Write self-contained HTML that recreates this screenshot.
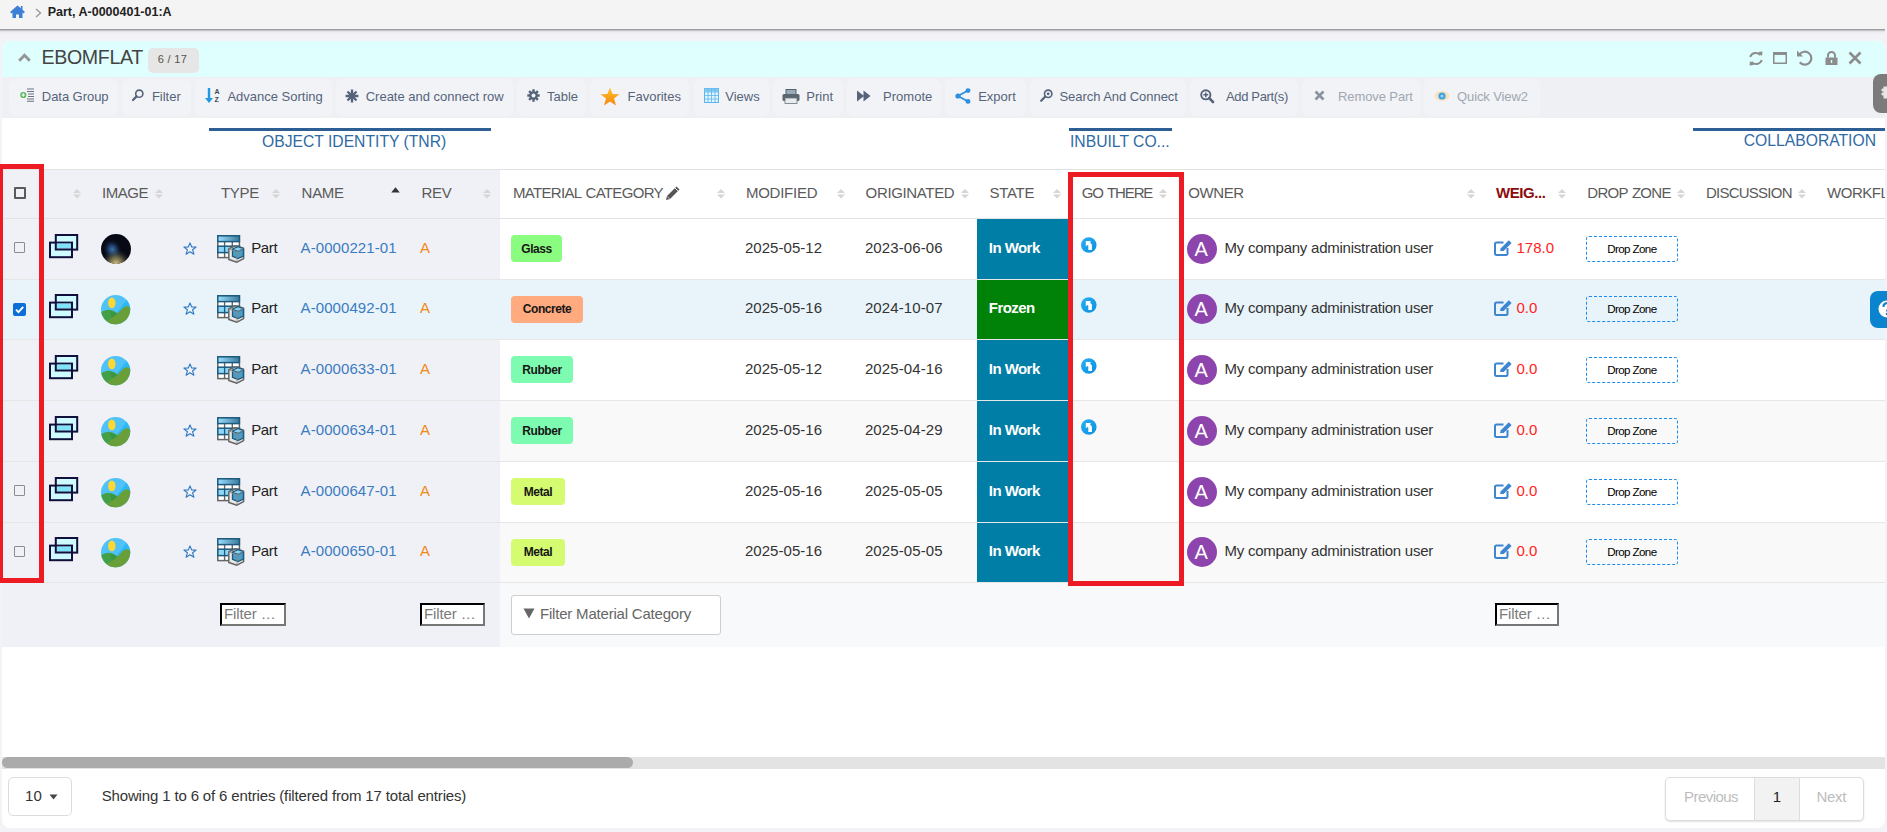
<!DOCTYPE html>
<html><head><meta charset="utf-8"><title>EBOMFLAT</title>
<style>
html,body{margin:0;padding:0}
body{width:1887px;height:832px;overflow:hidden;background:#f2f2f7;font-family:"Liberation Sans", sans-serif;position:relative}
.a{position:absolute}
.t{position:absolute;white-space:nowrap;line-height:1}
svg{overflow:visible}
</style></head><body>
<div class="a" style="left:-6px;top:0px;width:1899px;height:29px;background:#f4f4f4;box-shadow:0 1px 2px rgba(0,0,0,.45),0 2px 5px rgba(0,0,0,.08);"></div>
<svg class="a" style="left:10px;top:5px;" width="15" height="13" viewBox="0 0 15 13"><path d="M7.5 0.5 L0 7 L1.6 8.4 L2.5 7.6 V13 H6 V9.5 H9 V13 H12.5 V7.6 L13.4 8.4 L15 7 L12.5 4.8 V1 H10.8 V3.3 Z" fill="#3c7fd4"/></svg>
<svg class="a" style="left:35px;top:8px;" width="7" height="10" viewBox="0 0 7 10"><path d="M1 1 L5.5 5 L1 9" fill="none" stroke="#9a9a9a" stroke-width="1.4"/></svg>
<div class="t" style="top:6.42px;font-size:12.5px;color:#222;left:47.70px;font-weight:700;">Part, A-0000401-01:A</div>
<div class="a" style="left:2px;top:41px;width:1883px;height:787px;background:#fff;border-radius:8px;"></div>
<div class="a" style="left:2px;top:41px;width:1883px;height:36px;background:#dfffff;border-radius:8px 8px 0 0;"></div>
<svg class="a" style="left:18px;top:53px;" width="14" height="9" viewBox="0 0 14 9"><path d="M1.2 7.8 L6.5 2.3 L11.8 7.8" fill="none" stroke="#949494" stroke-width="2.8"/></svg>
<div class="t" style="top:48.41px;font-size:19.6px;color:#444;left:41.50px;letter-spacing:-0.35px;">EBOMFLAT</div>
<div class="a" style="left:148px;top:48px;width:51px;height:25px;background:#e6e6e6;border-radius:5px;"></div>
<div class="t" style="top:54.49px;font-size:11px;color:#5a5048;left:157.80px;letter-spacing:0.3px;">6 / 17</div>
<svg class="a" style="left:1748px;top:51px;" width="16" height="15" viewBox="0 0 16 15"><path d="M12.5 4.2 A6 6 0 0 0 2.2 6" fill="none" stroke="#8c8c8c" stroke-width="2"/><path d="M10 1 L14.5 0.5 L14 5 Z" fill="#8c8c8c"/><path d="M3.5 10.8 A6 6 0 0 0 13.8 9" fill="none" stroke="#8c8c8c" stroke-width="2"/><path d="M6 14 L1.5 14.5 L2 10 Z" fill="#8c8c8c"/></svg>
<svg class="a" style="left:1773px;top:52px;" width="14" height="12" viewBox="0 0 14 12"><rect x="0.75" y="0.75" width="12.5" height="10.5" fill="none" stroke="#8c8c8c" stroke-width="1.5"/><rect x="0" y="0" width="14" height="3" fill="#8c8c8c"/></svg>
<svg class="a" style="left:1796px;top:50px;" width="17" height="16" viewBox="0 0 17 16"><path d="M3.5 4.5 A6.5 6.5 0 1 1 3.8 12.3" fill="none" stroke="#8c8c8c" stroke-width="2.2"/><path d="M1 0.5 V6.5 H7 Z" fill="#8c8c8c"/></svg>
<svg class="a" style="left:1825px;top:51px;" width="13" height="14" viewBox="0 0 13 14"><path d="M3 6.5 V4.5 A3.5 3.5 0 0 1 10 4.5 V6.5" fill="none" stroke="#8c8c8c" stroke-width="2"/><rect x="0.5" y="6.5" width="12" height="7.5" fill="#8c8c8c"/><rect x="5.8" y="9" width="1.4" height="3" fill="#dcfefe"/></svg>
<svg class="a" style="left:1848px;top:51px;" width="14" height="14" viewBox="0 0 14 14"><path d="M1.5 1.5 L12.5 12.5 M12.5 1.5 L1.5 12.5" stroke="#8c8c8c" stroke-width="2.6"/></svg>
<div class="a" style="left:2px;top:77px;width:1883px;height:41px;background:#eff0f4;"></div>
<div class="a" style="left:9px;top:79px;width:109px;height:37px;background:#f2f3f6;border-radius:7px;"></div>
<div class="a" style="left:122px;top:79px;width:69px;height:37px;background:#f2f3f6;border-radius:7px;"></div>
<div class="a" style="left:195px;top:79px;width:137px;height:37px;background:#f2f3f6;border-radius:7px;"></div>
<div class="a" style="left:336px;top:79px;width:177px;height:37px;background:#f2f3f6;border-radius:7px;"></div>
<div class="a" style="left:517px;top:79px;width:69px;height:37px;background:#f2f3f6;border-radius:7px;"></div>
<div class="a" style="left:590px;top:79px;width:99px;height:37px;background:#f2f3f6;border-radius:7px;"></div>
<div class="a" style="left:694px;top:79px;width:75px;height:37px;background:#f2f3f6;border-radius:7px;"></div>
<div class="a" style="left:773px;top:79px;width:70px;height:37px;background:#f2f3f6;border-radius:7px;"></div>
<div class="a" style="left:847px;top:79px;width:94px;height:37px;background:#f2f3f6;border-radius:7px;"></div>
<div class="a" style="left:945px;top:79px;width:81px;height:37px;background:#f2f3f6;border-radius:7px;"></div>
<div class="a" style="left:1030px;top:79px;width:156px;height:37px;background:#f2f3f6;border-radius:7px;"></div>
<div class="a" style="left:1190px;top:79px;width:108px;height:37px;background:#f2f3f6;border-radius:7px;"></div>
<div class="a" style="left:1302px;top:79px;width:118px;height:37px;background:#f2f3f6;border-radius:7px;"></div>
<div class="a" style="left:1424px;top:79px;width:116px;height:37px;background:#f2f3f6;border-radius:7px;"></div>
<svg class="a" style="left:20px;top:88px;" width="15" height="14" viewBox="0 0 15 14"><circle cx="3.3" cy="7" r="3.1" fill="#5cb85c"/><path d="M1.6 7 H5 M3.3 5.3 V8.7" stroke="#fff" stroke-width="1.1"/><path d="M7 1 H14 M7 3.5 H14 M8 6 H14 M8 8.5 H14 M7 11 H14 M7 13.3 H14" stroke="#6c7280" stroke-width="1.1"/></svg>
<div class="t" style="top:90.20px;font-size:13px;color:#55647a;left:41.80px;letter-spacing:-0.05px;">Data Group</div>
<svg class="a" style="left:132px;top:89px;" width="12" height="12" viewBox="0 0 12 12"><circle cx="7.3" cy="4.7" r="3.6" fill="none" stroke="#55647a" stroke-width="1.6"/><path d="M4.6 7.4 L1 11" stroke="#55647a" stroke-width="2.2" stroke-linecap="round"/></svg>
<div class="t" style="top:90.20px;font-size:13px;color:#55647a;left:151.90px;">Filter</div>
<svg class="a" style="left:205px;top:87px;" width="16" height="17" viewBox="0 0 16 17"><path d="M4 1 V13" stroke="#1e9be0" stroke-width="2.4"/><path d="M0 11 L4 16 L8 11 Z" fill="#1e9be0"/><text x="9.5" y="7" font-size="7" font-weight="700" fill="#3a4a58" font-family="Liberation Sans">A</text><text x="9.5" y="15" font-size="7" font-weight="700" fill="#3a4a58" font-family="Liberation Sans">Z</text></svg>
<div class="t" style="top:90.20px;font-size:13px;color:#55647a;left:227.40px;">Advance Sorting</div>
<svg class="a" style="left:345px;top:89px;" width="14" height="14" viewBox="0 0 14 14"><path d="M7 0.6 V13.4 M0.6 7 H13.4 M2.5 2.5 L11.5 11.5 M11.5 2.5 L2.5 11.5" stroke="#55647a" stroke-width="2.3"/><circle cx="7" cy="7" r="3.2" fill="#55647a"/></svg>
<div class="t" style="top:90.20px;font-size:13px;color:#55647a;left:365.70px;">Create and connect row</div>
<svg class="a" style="left:527px;top:89px;" width="13" height="13" viewBox="0 0 13 13"><path d="M6.5 0.3 V12.7 M0.3 6.5 H12.7 M2.1 2.1 L10.9 10.9 M10.9 2.1 L2.1 10.9" stroke="#55647a" stroke-width="2.4"/><circle cx="6.5" cy="6.5" r="4.3" fill="#55647a"/><circle cx="6.5" cy="6.5" r="2" fill="#f2f3f6"/></svg>
<div class="t" style="top:90.20px;font-size:13px;color:#55647a;left:547.00px;">Table</div>
<svg class="a" style="left:600px;top:87px;" width="20" height="19" viewBox="0 0 20 19"><defs><linearGradient id="sg" x1="0" y1="0" x2="0" y2="1"><stop offset="0" stop-color="#ffc42e"/><stop offset="1" stop-color="#f5850c"/></linearGradient></defs><path d="M10 0.5 L12.6 7 L19.5 7.2 L14 11.5 L16 18.5 L10 14.5 L4 18.5 L6 11.5 L0.5 7.2 L7.4 7 Z" fill="url(#sg)"/></svg>
<div class="t" style="top:90.20px;font-size:13px;color:#55647a;left:627.50px;">Favorites</div>
<svg class="a" style="left:704px;top:88px;" width="15" height="15" viewBox="0 0 15 15"><rect x="0.5" y="0.5" width="14" height="14" fill="#e2f4fd" stroke="#5ab6ec"/><rect x="0.5" y="0.5" width="14" height="3" fill="#7fc8f2"/><path d="M0.5 4 H14.5 M0.5 7.5 H14.5 M0.5 11 H14.5 M4 0.5 V14.5 M7.5 0.5 V14.5 M11 0.5 V14.5" stroke="#5ab6ec" stroke-width="0.8"/></svg>
<div class="t" style="top:90.20px;font-size:13px;color:#55647a;left:725.30px;">Views</div>
<svg class="a" style="left:782px;top:89px;" width="18" height="15" viewBox="0 0 18 15"><rect x="4" y="0.5" width="10" height="5" fill="#9ab" stroke="#566"/><rect x="0.5" y="5" width="17" height="7" rx="1.5" fill="#5a6570"/><rect x="3" y="9" width="12" height="5.5" fill="#e8ecef" stroke="#6a757f" stroke-width="0.8"/></svg>
<div class="t" style="top:90.20px;font-size:13px;color:#55647a;left:806.30px;">Print</div>
<svg class="a" style="left:857px;top:90px;" width="14" height="12" viewBox="0 0 14 12"><path d="M0 0.5 L7 6 L0 11.5 Z M6.5 0.5 L13.5 6 L6.5 11.5 Z" fill="#55647a"/></svg>
<div class="t" style="top:90.20px;font-size:13px;color:#55647a;left:883.10px;">Promote</div>
<svg class="a" style="left:955px;top:88px;" width="16" height="16" viewBox="0 0 16 16"><path d="M3 8 L13 2.5 M3 8 L13 13.5" stroke="#2c8fe0" stroke-width="1.8"/><circle cx="3" cy="8" r="2.6" fill="#2c8fe0"/><circle cx="13" cy="2.6" r="2.4" fill="#2c8fe0"/><circle cx="13" cy="13.4" r="2.4" fill="#2c8fe0"/></svg>
<div class="t" style="top:90.20px;font-size:13px;color:#55647a;left:978.20px;">Export</div>
<svg class="a" style="left:1040px;top:89px;" width="13" height="13" viewBox="0 0 13 13"><circle cx="8.2" cy="4.8" r="3.7" fill="none" stroke="#55647a" stroke-width="1.6"/><circle cx="8.2" cy="4.8" r="1.4" fill="#55647a"/><path d="M5.3 7.6 L1.2 11.8" stroke="#55647a" stroke-width="2.2" stroke-linecap="round"/></svg>
<div class="t" style="top:90.20px;font-size:13px;color:#55647a;left:1059.50px;letter-spacing:-0.05px;">Search And Connect</div>
<svg class="a" style="left:1200px;top:89px;" width="14" height="14" viewBox="0 0 14 14"><circle cx="5.8" cy="5.8" r="4.6" fill="none" stroke="#55647a" stroke-width="1.9"/><path d="M9.2 9.2 L13 13" stroke="#55647a" stroke-width="2.6" stroke-linecap="round"/><path d="M3.4 5.8 H8.2 M5.8 3.4 V8.2" stroke="#55647a" stroke-width="1.5"/></svg>
<div class="t" style="top:90.20px;font-size:13px;color:#55647a;left:1226.00px;letter-spacing:-0.35px;">Add Part(s)</div>
<svg class="a" style="left:1314px;top:90px;" width="11" height="11" viewBox="0 0 11 11"><path d="M1.5 1.5 L9.5 9.5 M9.5 1.5 L1.5 9.5" stroke="#8a929d" stroke-width="2.6"/></svg>
<div class="t" style="top:90.20px;font-size:13px;color:#a0a7b2;left:1338.00px;letter-spacing:-0.1px;">Remove Part</div>
<svg class="a" style="left:1434px;top:90px;" width="16" height="12" viewBox="0 0 16 12"><ellipse cx="8" cy="6" rx="7.5" ry="5" fill="#fbe1c0"/><circle cx="8" cy="6" r="3.6" fill="#3ba3e0"/><circle cx="8" cy="6" r="1.6" fill="#9dd3f5"/></svg>
<div class="t" style="top:90.20px;font-size:13px;color:#a0a7b2;left:1457.00px;letter-spacing:-0.1px;">Quick View2</div>
<div class="a" style="left:209px;top:128px;width:282px;height:3px;background:#2d5f94;"></div>
<div class="t" style="top:133.71px;font-size:15.7px;color:#2f6aa3;left:262.00px;">OBJECT IDENTITY (TNR)</div>
<div class="a" style="left:1069px;top:128px;width:103px;height:3px;background:#2d5f94;"></div>
<div class="t" style="top:133.71px;font-size:15.7px;color:#2f6aa3;left:1070.00px;">INBUILT CO...</div>
<div class="a" style="left:1693px;top:128px;width:192px;height:3px;background:#2d5f94;"></div>
<div class="t" style="top:133.31px;font-size:15.7px;color:#2f6aa3;right:11.00px;">COLLABORATION</div>
<div class="a" style="left:2px;top:169px;width:1883px;height:1px;background:#e3e3e3;"></div>
<div class="a" style="left:2px;top:170px;width:498px;height:48px;background:#f0f1f6;"></div>
<div class="a" style="left:2px;top:218px;width:1883px;height:1px;background:#e3e3e3;"></div>
<div class="a" style="left:14px;top:187px;width:12px;height:12px;box-sizing:border-box;border:2px solid #5a5a5a;border-radius:1px;"></div>
<svg class="a" style="left:73px;top:189px;" width="8" height="10" viewBox="0 0 8 10"><path d="M4 0 L8 4 L0 4 Z" fill="#d6d6d6"/><path d="M0 5.5 L8 5.5 L4 9.5 Z" fill="#d6d6d6"/></svg>
<div class="t" style="top:185.30px;font-size:15px;color:#5a5a5a;left:102.00px;letter-spacing:-0.45px;">IMAGE</div>
<svg class="a" style="left:155px;top:189px;" width="8" height="10" viewBox="0 0 8 10"><path d="M4 0 L8 4 L0 4 Z" fill="#d6d6d6"/><path d="M0 5.5 L8 5.5 L4 9.5 Z" fill="#d6d6d6"/></svg>
<div class="t" style="top:185.30px;font-size:15px;color:#5a5a5a;left:221.00px;letter-spacing:-0.3px;">TYPE</div>
<svg class="a" style="left:272px;top:189px;" width="8" height="10" viewBox="0 0 8 10"><path d="M4 0 L8 4 L0 4 Z" fill="#d6d6d6"/><path d="M0 5.5 L8 5.5 L4 9.5 Z" fill="#d6d6d6"/></svg>
<div class="t" style="top:185.30px;font-size:15px;color:#5a5a5a;left:301.60px;letter-spacing:-0.3px;">NAME</div>
<svg class="a" style="left:391px;top:187px;" width="9" height="6" viewBox="0 0 9 6"><path d="M4.5 0.3 L8.8 5.5 L0.2 5.5 Z" fill="#333"/></svg>
<div class="t" style="top:185.30px;font-size:15px;color:#5a5a5a;left:421.50px;letter-spacing:-0.3px;">REV</div>
<svg class="a" style="left:483px;top:189px;" width="8" height="10" viewBox="0 0 8 10"><path d="M4 0 L8 4 L0 4 Z" fill="#d6d6d6"/><path d="M0 5.5 L8 5.5 L4 9.5 Z" fill="#d6d6d6"/></svg>
<div class="t" style="top:185.30px;font-size:15px;color:#5a5a5a;left:513.00px;letter-spacing:-0.67px;word-spacing:1px;">MATERIAL CATEGORY</div>
<svg class="a" style="left:665px;top:185px;" width="16" height="16" viewBox="0 0 16 16"><path d="M1 15 L2 11 L11.5 1.5 L14.5 4.5 L5 14 Z" fill="#555"/><path d="M2.3 11.6 L4.4 13.7" stroke="#f0f0f0" stroke-width="0.8"/><path d="M10 3 L13 6" stroke="#fff" stroke-width="0.9"/></svg>
<svg class="a" style="left:717px;top:189px;" width="8" height="10" viewBox="0 0 8 10"><path d="M4 0 L8 4 L0 4 Z" fill="#d6d6d6"/><path d="M0 5.5 L8 5.5 L4 9.5 Z" fill="#d6d6d6"/></svg>
<div class="t" style="top:185.30px;font-size:15px;color:#5a5a5a;left:745.90px;letter-spacing:-0.25px;">MODIFIED</div>
<svg class="a" style="left:837px;top:189px;" width="8" height="10" viewBox="0 0 8 10"><path d="M4 0 L8 4 L0 4 Z" fill="#d6d6d6"/><path d="M0 5.5 L8 5.5 L4 9.5 Z" fill="#d6d6d6"/></svg>
<div class="t" style="top:185.30px;font-size:15px;color:#5a5a5a;left:865.60px;letter-spacing:-0.35px;">ORIGINATED</div>
<svg class="a" style="left:960.5px;top:189px;" width="8" height="10" viewBox="0 0 8 10"><path d="M4 0 L8 4 L0 4 Z" fill="#d6d6d6"/><path d="M0 5.5 L8 5.5 L4 9.5 Z" fill="#d6d6d6"/></svg>
<div class="t" style="top:185.30px;font-size:15px;color:#5a5a5a;left:989.50px;letter-spacing:-0.3px;">STATE</div>
<svg class="a" style="left:1053px;top:189px;" width="8" height="10" viewBox="0 0 8 10"><path d="M4 0 L8 4 L0 4 Z" fill="#d6d6d6"/><path d="M0 5.5 L8 5.5 L4 9.5 Z" fill="#d6d6d6"/></svg>
<div class="t" style="top:185.30px;font-size:15px;color:#5a5a5a;left:1081.80px;letter-spacing:-1.15px;word-spacing:1.5px;">GO THERE</div>
<svg class="a" style="left:1159px;top:189px;" width="8" height="10" viewBox="0 0 8 10"><path d="M4 0 L8 4 L0 4 Z" fill="#d6d6d6"/><path d="M0 5.5 L8 5.5 L4 9.5 Z" fill="#d6d6d6"/></svg>
<div class="t" style="top:185.30px;font-size:15px;color:#5a5a5a;left:1188.20px;letter-spacing:-0.4px;">OWNER</div>
<svg class="a" style="left:1467px;top:189px;" width="8" height="10" viewBox="0 0 8 10"><path d="M4 0 L8 4 L0 4 Z" fill="#d6d6d6"/><path d="M0 5.5 L8 5.5 L4 9.5 Z" fill="#d6d6d6"/></svg>
<div class="t" style="top:185.30px;font-size:15px;color:#8b0a0a;left:1495.90px;font-weight:700;letter-spacing:-0.4px;">WEIG...</div>
<svg class="a" style="left:1558px;top:189px;" width="8" height="10" viewBox="0 0 8 10"><path d="M4 0 L8 4 L0 4 Z" fill="#d6d6d6"/><path d="M0 5.5 L8 5.5 L4 9.5 Z" fill="#d6d6d6"/></svg>
<div class="t" style="top:185.30px;font-size:15px;color:#5a5a5a;left:1587.30px;letter-spacing:-0.72px;word-spacing:1px;">DROP ZONE</div>
<svg class="a" style="left:1677px;top:189px;" width="8" height="10" viewBox="0 0 8 10"><path d="M4 0 L8 4 L0 4 Z" fill="#d6d6d6"/><path d="M0 5.5 L8 5.5 L4 9.5 Z" fill="#d6d6d6"/></svg>
<div class="t" style="top:185.30px;font-size:15px;color:#5a5a5a;left:1705.90px;letter-spacing:-0.75px;">DISCUSSION</div>
<svg class="a" style="left:1797.5px;top:189px;" width="8" height="10" viewBox="0 0 8 10"><path d="M4 0 L8 4 L0 4 Z" fill="#d6d6d6"/><path d="M0 5.5 L8 5.5 L4 9.5 Z" fill="#d6d6d6"/></svg>
<div class="t" style="top:185.30px;font-size:15px;color:#5a5a5a;left:1827.10px;letter-spacing:-0.5px;">WORKFLOW</div>
<div class="a" style="left:2px;top:219px;width:1883px;height:60px;background:#ffffff;"></div>
<div class="a" style="left:2px;top:219px;width:498px;height:60px;background:#f0f1f6;"></div>
<div class="a" style="left:2px;top:279px;width:1883px;height:1px;background:#e6e6e6;"></div>
<div class="a" style="left:14px;top:242px;width:11px;height:11px;box-sizing:border-box;border:1.5px solid #8c8c8c;border-radius:1px;"></div>
<svg class="a" style="left:49px;top:234px;" width="30" height="25" viewBox="0 0 30 25"><rect x="6.8" y="1" width="21.4" height="14.6" fill="#cdfbff" stroke="#120f3c" stroke-width="2"/><rect x="1" y="8.6" width="22" height="14.6" fill="#cdfbff" stroke="#120f3c" stroke-width="2"/><rect x="7.8" y="9.6" width="14.2" height="5" fill="#80e3f8"/><path d="M6.8 8.6 V15.6 H23" fill="none" stroke="#120f3c" stroke-width="2"/></svg>
<svg class="a" style="left:101px;top:234px;" width="30" height="30" viewBox="0 0 30 30"><defs><radialGradient id="ng1" cx="0.42" cy="0.5" r="0.42"><stop offset="0" stop-color="#3f73a8"/><stop offset="0.45" stop-color="#1d3a66"/><stop offset="1" stop-color="#0a1020" stop-opacity="0"/></radialGradient><radialGradient id="ng2" cx="0.5" cy="1" r="0.5"><stop offset="0" stop-color="#e0c888"/><stop offset="0.45" stop-color="#8a8458" stop-opacity="0.75"/><stop offset="1" stop-color="#203030" stop-opacity="0"/></radialGradient></defs><circle cx="15" cy="15" r="15" fill="#070a14"/><ellipse cx="13" cy="15" rx="11" ry="13" fill="url(#ng1)" transform="rotate(-25 13 15)"/><circle cx="15" cy="15" r="15" fill="url(#ng2)"/></svg>
<svg class="a" style="left:183px;top:242px;" width="14" height="13" viewBox="0 0 14 13"><path d="M7 0.9 L8.7 5 L13.1 5.1 L9.6 7.8 L10.9 12.2 L7 9.7 L3.1 12.2 L4.4 7.8 L0.9 5.1 L5.3 5 Z" fill="none" stroke="#2f78c4" stroke-width="1.1" stroke-linejoin="round"/></svg>
<svg class="a" style="left:217px;top:235px;" width="28" height="28" viewBox="0 0 28 28"><defs><linearGradient id="pg0" x1="0" y1="0" x2="1" y2="0"><stop offset="0" stop-color="#9be0ff"/><stop offset="1" stop-color="#3a7a9c"/></linearGradient></defs><rect x="0.8" y="0.8" width="21.6" height="21.8" fill="#fff" stroke="#666" stroke-width="1.5"/><path d="M7.6 6.5 V22.5 M15.3 6.5 V22.5" stroke="#666" stroke-width="1.4"/><rect x="0.8" y="0.8" width="21.6" height="5.8" fill="url(#pg0)" stroke="#1d5a7d" stroke-width="1.5"/><rect x="0.8" y="11.2" width="21.6" height="6.4" fill="#8dd6f5" stroke="#1d5a7d" stroke-width="1.5"/><path d="M7.6 11.2 V17.6" stroke="#1d5a7d" stroke-width="1.3"/><path d="M11.8 13.8 L18.5 10.7 L26.6 13.2 V23.6 L20 27.2 L11.8 24.5 Z" fill="#e9e9e9" stroke="#666" stroke-width="1.5" stroke-linejoin="round"/><path d="M15.5 14.2 L21 11.7 L26.4 13.6 V21 L21 23.6 L15.5 21.4 Z" fill="#4d9cc4" stroke="#1d5a7d" stroke-width="1.3"/><path d="M15.6 14.3 L21 16.4 L26.3 13.7" fill="none" stroke="#1d5a7d" stroke-width="1.1"/><path d="M16.6 14.2 L21 12.4 L25 13.8 L21 15.6 Z" fill="#8fd3f0"/><path d="M11.8 13.8 L20 16.9 V27 M20 16.9 L26.6 13.2" fill="none" stroke="#8a8a8a" stroke-width="0.9"/></svg>
<div class="t" style="top:239.50px;font-size:15px;color:#222;left:251.20px;letter-spacing:-0.35px;">Part</div>
<div class="t" style="top:240.10px;font-size:15px;color:#3b7cc0;left:300.60px;letter-spacing:0.08px;">A-0000221-01</div>
<div class="t" style="top:240.10px;font-size:15px;color:#f08a16;left:420.00px;">A</div>
<div class="a" style="left:511px;top:235px;width:51px;height:27px;background:#8afc7f;border-radius:4px;"></div>
<div class="t" style="left:511px;top:235px;width:51px;height:27px;line-height:28.5px;text-align:center;font-size:12px;font-weight:700;color:#161616;letter-spacing:-0.45px">Glass</div>
<div class="t" style="top:240.10px;font-size:15px;color:#333;left:744.90px;letter-spacing:0.05px;">2025-05-12</div>
<div class="t" style="top:240.10px;font-size:15px;color:#333;left:864.90px;letter-spacing:0.1px;">2023-06-06</div>
<div class="a" style="left:977px;top:219px;width:91px;height:60px;background:#007ea6;"></div>
<div class="t" style="top:240.30px;font-size:15px;color:#fff;left:988.80px;font-weight:700;letter-spacing:-0.55px;">In Work</div>
<svg class="a" style="left:1081px;top:237px;" width="16" height="16" viewBox="0 0 16 16"><defs><linearGradient id="gg0" x1="0" y1="0" x2="1" y2="1"><stop offset="0" stop-color="#2ab0f4"/><stop offset="1" stop-color="#0a8fdf"/></linearGradient></defs><circle cx="7.8" cy="8" r="7.8" fill="url(#gg0)"/><path d="M4.8 4 H10 L9.1 5.6 L10.9 7.4 V12.9 H7.3 V8.6 L6.6 7.9 L4.8 9.2 Z" fill="#fff"/></svg>
<div class="a" style="left:1187px;top:234px;width:30px;height:30px;background:#8e44ad;border-radius:50%;"></div>
<div class="t" style="top:238.97px;font-size:20px;color:#fff;left:1194.40px;">A</div>
<div class="t" style="top:240.10px;font-size:15px;color:#333;left:1224.60px;letter-spacing:-0.25px;">My company administration user</div>
<svg class="a" style="left:1494px;top:239px;" width="19" height="17" viewBox="0 0 19 17"><path d="M9.5 3.5 H2.5 A1.5 1.5 0 0 0 1 5 V14.5 A1.5 1.5 0 0 0 2.5 16 H12 A1.5 1.5 0 0 0 13.5 14.5 V9" fill="none" stroke="#3d85d0" stroke-width="2"/><path d="M6 12 L6.8 9.2 L14.8 1.2 L17.6 4 L9.6 12 Z" fill="#3d85d0"/></svg>
<div class="t" style="top:240.10px;font-size:15px;color:#ff2222;left:1516.50px;">178.0</div>
<div class="a" style="left:1586px;top:236px;width:92px;height:26px;box-sizing:border-box;border:1.6px dashed #1a8cf2;border-radius:3px;"></div>
<div class="t" style="top:243.18px;font-size:11.6px;color:#000;left:1607.20px;letter-spacing:-0.6px;">Drop Zone</div>
<div class="a" style="left:2px;top:280px;width:1883px;height:59px;background:#e8f3fa;"></div>
<div class="a" style="left:2px;top:280px;width:498px;height:59px;background:#e8f3fa;"></div>
<div class="a" style="left:2px;top:339px;width:1883px;height:1px;background:#e6e6e6;"></div>
<svg class="a" style="left:13px;top:303px;" width="13" height="13" viewBox="0 0 13 13"><rect x="0" y="0" width="13" height="13" rx="2" fill="#0b6fd6"/><path d="M3 6.6 L5.5 9.2 L10.2 3.8" fill="none" stroke="#fff" stroke-width="1.9"/></svg>
<svg class="a" style="left:49px;top:294px;" width="30" height="25" viewBox="0 0 30 25"><rect x="6.8" y="1" width="21.4" height="14.6" fill="#cdfbff" stroke="#120f3c" stroke-width="2"/><rect x="1" y="8.6" width="22" height="14.6" fill="#cdfbff" stroke="#120f3c" stroke-width="2"/><rect x="7.8" y="9.6" width="14.2" height="5" fill="#80e3f8"/><path d="M6.8 8.6 V15.6 H23" fill="none" stroke="#120f3c" stroke-width="2"/></svg>
<svg class="a" style="left:101px;top:295px;" width="30" height="30" viewBox="0 0 30 30"><defs><clipPath id="cc1"><circle cx="14.6" cy="14.6" r="14.6"/></clipPath></defs><g clip-path="url(#cc1)"><rect x="-1" y="-1" width="32" height="32" fill="#4fc3f7"/><path d="M13 21 L27 3 L32 3 V18 Z" fill="#2fb7f5"/><ellipse cx="10.8" cy="7.9" rx="3.7" ry="5.3" fill="#fdd835"/><path d="M-1 18 C3 15 7.5 14 11.5 15.5 C14 16.5 16 18 18 19.5 V31 H-1 Z" fill="#43a047"/><path d="M9 16 C12 16.5 15 18 17 19.5 L12 27 Z" fill="#3a9640"/><path d="M3 27.5 C9 24 15 21 19 16 C21.5 13 24 11 26.2 11.2 C28.3 11.5 29.5 13 30.5 14.5 V31 H3 Z" fill="#689f38"/></g></svg>
<svg class="a" style="left:183px;top:302px;" width="14" height="13" viewBox="0 0 14 13"><path d="M7 0.9 L8.7 5 L13.1 5.1 L9.6 7.8 L10.9 12.2 L7 9.7 L3.1 12.2 L4.4 7.8 L0.9 5.1 L5.3 5 Z" fill="none" stroke="#2f78c4" stroke-width="1.1" stroke-linejoin="round"/></svg>
<svg class="a" style="left:217px;top:295px;" width="28" height="28" viewBox="0 0 28 28"><defs><linearGradient id="pg1" x1="0" y1="0" x2="1" y2="0"><stop offset="0" stop-color="#9be0ff"/><stop offset="1" stop-color="#3a7a9c"/></linearGradient></defs><rect x="0.8" y="0.8" width="21.6" height="21.8" fill="#fff" stroke="#666" stroke-width="1.5"/><path d="M7.6 6.5 V22.5 M15.3 6.5 V22.5" stroke="#666" stroke-width="1.4"/><rect x="0.8" y="0.8" width="21.6" height="5.8" fill="url(#pg1)" stroke="#1d5a7d" stroke-width="1.5"/><rect x="0.8" y="11.2" width="21.6" height="6.4" fill="#8dd6f5" stroke="#1d5a7d" stroke-width="1.5"/><path d="M7.6 11.2 V17.6" stroke="#1d5a7d" stroke-width="1.3"/><path d="M11.8 13.8 L18.5 10.7 L26.6 13.2 V23.6 L20 27.2 L11.8 24.5 Z" fill="#e9e9e9" stroke="#666" stroke-width="1.5" stroke-linejoin="round"/><path d="M15.5 14.2 L21 11.7 L26.4 13.6 V21 L21 23.6 L15.5 21.4 Z" fill="#4d9cc4" stroke="#1d5a7d" stroke-width="1.3"/><path d="M15.6 14.3 L21 16.4 L26.3 13.7" fill="none" stroke="#1d5a7d" stroke-width="1.1"/><path d="M16.6 14.2 L21 12.4 L25 13.8 L21 15.6 Z" fill="#8fd3f0"/><path d="M11.8 13.8 L20 16.9 V27 M20 16.9 L26.6 13.2" fill="none" stroke="#8a8a8a" stroke-width="0.9"/></svg>
<div class="t" style="top:299.50px;font-size:15px;color:#222;left:251.20px;letter-spacing:-0.35px;">Part</div>
<div class="t" style="top:300.10px;font-size:15px;color:#3b7cc0;left:300.60px;letter-spacing:0.08px;">A-0000492-01</div>
<div class="t" style="top:300.10px;font-size:15px;color:#f08a16;left:420.00px;">A</div>
<div class="a" style="left:511px;top:296px;width:72px;height:27px;background:#ffaa7f;border-radius:4px;"></div>
<div class="t" style="left:511px;top:295px;width:72px;height:27px;line-height:28.5px;text-align:center;font-size:12px;font-weight:700;color:#161616;letter-spacing:-0.45px">Concrete</div>
<div class="t" style="top:300.10px;font-size:15px;color:#333;left:744.90px;letter-spacing:0.05px;">2025-05-16</div>
<div class="t" style="top:300.10px;font-size:15px;color:#333;left:864.90px;letter-spacing:0.1px;">2024-10-07</div>
<div class="a" style="left:977px;top:280px;width:91px;height:59px;background:#008208;"></div>
<div class="t" style="top:300.30px;font-size:15px;color:#fff;left:988.80px;font-weight:700;letter-spacing:-0.55px;">Frozen</div>
<svg class="a" style="left:1081px;top:297px;" width="16" height="16" viewBox="0 0 16 16"><defs><linearGradient id="gg1" x1="0" y1="0" x2="1" y2="1"><stop offset="0" stop-color="#2ab0f4"/><stop offset="1" stop-color="#0a8fdf"/></linearGradient></defs><circle cx="7.8" cy="8" r="7.8" fill="url(#gg1)"/><path d="M4.8 4 H10 L9.1 5.6 L10.9 7.4 V12.9 H7.3 V8.6 L6.6 7.9 L4.8 9.2 Z" fill="#fff"/></svg>
<div class="a" style="left:1187px;top:294px;width:30px;height:30px;background:#8e44ad;border-radius:50%;"></div>
<div class="t" style="top:298.97px;font-size:20px;color:#fff;left:1194.40px;">A</div>
<div class="t" style="top:300.10px;font-size:15px;color:#333;left:1224.60px;letter-spacing:-0.25px;">My company administration user</div>
<svg class="a" style="left:1494px;top:299px;" width="19" height="17" viewBox="0 0 19 17"><path d="M9.5 3.5 H2.5 A1.5 1.5 0 0 0 1 5 V14.5 A1.5 1.5 0 0 0 2.5 16 H12 A1.5 1.5 0 0 0 13.5 14.5 V9" fill="none" stroke="#3d85d0" stroke-width="2"/><path d="M6 12 L6.8 9.2 L14.8 1.2 L17.6 4 L9.6 12 Z" fill="#3d85d0"/></svg>
<div class="t" style="top:300.10px;font-size:15px;color:#ff2222;left:1516.50px;">0.0</div>
<div class="a" style="left:1586px;top:296px;width:92px;height:26px;box-sizing:border-box;border:1.6px dashed #1a8cf2;border-radius:3px;"></div>
<div class="t" style="top:303.18px;font-size:11.6px;color:#000;left:1607.20px;letter-spacing:-0.6px;">Drop Zone</div>
<div class="a" style="left:2px;top:340px;width:1883px;height:60px;background:#ffffff;"></div>
<div class="a" style="left:2px;top:340px;width:498px;height:60px;background:#f0f1f6;"></div>
<div class="a" style="left:2px;top:400px;width:1883px;height:1px;background:#e6e6e6;"></div>
<svg class="a" style="left:49px;top:355px;" width="30" height="25" viewBox="0 0 30 25"><rect x="6.8" y="1" width="21.4" height="14.6" fill="#cdfbff" stroke="#120f3c" stroke-width="2"/><rect x="1" y="8.6" width="22" height="14.6" fill="#cdfbff" stroke="#120f3c" stroke-width="2"/><rect x="7.8" y="9.6" width="14.2" height="5" fill="#80e3f8"/><path d="M6.8 8.6 V15.6 H23" fill="none" stroke="#120f3c" stroke-width="2"/></svg>
<svg class="a" style="left:101px;top:356px;" width="30" height="30" viewBox="0 0 30 30"><defs><clipPath id="cc2"><circle cx="14.6" cy="14.6" r="14.6"/></clipPath></defs><g clip-path="url(#cc2)"><rect x="-1" y="-1" width="32" height="32" fill="#4fc3f7"/><path d="M13 21 L27 3 L32 3 V18 Z" fill="#2fb7f5"/><ellipse cx="10.8" cy="7.9" rx="3.7" ry="5.3" fill="#fdd835"/><path d="M-1 18 C3 15 7.5 14 11.5 15.5 C14 16.5 16 18 18 19.5 V31 H-1 Z" fill="#43a047"/><path d="M9 16 C12 16.5 15 18 17 19.5 L12 27 Z" fill="#3a9640"/><path d="M3 27.5 C9 24 15 21 19 16 C21.5 13 24 11 26.2 11.2 C28.3 11.5 29.5 13 30.5 14.5 V31 H3 Z" fill="#689f38"/></g></svg>
<svg class="a" style="left:183px;top:363px;" width="14" height="13" viewBox="0 0 14 13"><path d="M7 0.9 L8.7 5 L13.1 5.1 L9.6 7.8 L10.9 12.2 L7 9.7 L3.1 12.2 L4.4 7.8 L0.9 5.1 L5.3 5 Z" fill="none" stroke="#2f78c4" stroke-width="1.1" stroke-linejoin="round"/></svg>
<svg class="a" style="left:217px;top:356px;" width="28" height="28" viewBox="0 0 28 28"><defs><linearGradient id="pg2" x1="0" y1="0" x2="1" y2="0"><stop offset="0" stop-color="#9be0ff"/><stop offset="1" stop-color="#3a7a9c"/></linearGradient></defs><rect x="0.8" y="0.8" width="21.6" height="21.8" fill="#fff" stroke="#666" stroke-width="1.5"/><path d="M7.6 6.5 V22.5 M15.3 6.5 V22.5" stroke="#666" stroke-width="1.4"/><rect x="0.8" y="0.8" width="21.6" height="5.8" fill="url(#pg2)" stroke="#1d5a7d" stroke-width="1.5"/><rect x="0.8" y="11.2" width="21.6" height="6.4" fill="#8dd6f5" stroke="#1d5a7d" stroke-width="1.5"/><path d="M7.6 11.2 V17.6" stroke="#1d5a7d" stroke-width="1.3"/><path d="M11.8 13.8 L18.5 10.7 L26.6 13.2 V23.6 L20 27.2 L11.8 24.5 Z" fill="#e9e9e9" stroke="#666" stroke-width="1.5" stroke-linejoin="round"/><path d="M15.5 14.2 L21 11.7 L26.4 13.6 V21 L21 23.6 L15.5 21.4 Z" fill="#4d9cc4" stroke="#1d5a7d" stroke-width="1.3"/><path d="M15.6 14.3 L21 16.4 L26.3 13.7" fill="none" stroke="#1d5a7d" stroke-width="1.1"/><path d="M16.6 14.2 L21 12.4 L25 13.8 L21 15.6 Z" fill="#8fd3f0"/><path d="M11.8 13.8 L20 16.9 V27 M20 16.9 L26.6 13.2" fill="none" stroke="#8a8a8a" stroke-width="0.9"/></svg>
<div class="t" style="top:360.50px;font-size:15px;color:#222;left:251.20px;letter-spacing:-0.35px;">Part</div>
<div class="t" style="top:361.10px;font-size:15px;color:#3b7cc0;left:300.60px;letter-spacing:0.08px;">A-0000633-01</div>
<div class="t" style="top:361.10px;font-size:15px;color:#f08a16;left:420.00px;">A</div>
<div class="a" style="left:511px;top:356px;width:62px;height:27px;background:#7dfbb0;border-radius:4px;"></div>
<div class="t" style="left:511px;top:356px;width:62px;height:27px;line-height:28.5px;text-align:center;font-size:12px;font-weight:700;color:#161616;letter-spacing:-0.45px">Rubber</div>
<div class="t" style="top:361.10px;font-size:15px;color:#333;left:744.90px;letter-spacing:0.05px;">2025-05-12</div>
<div class="t" style="top:361.10px;font-size:15px;color:#333;left:864.90px;letter-spacing:0.1px;">2025-04-16</div>
<div class="a" style="left:977px;top:340px;width:91px;height:60px;background:#007ea6;"></div>
<div class="t" style="top:361.30px;font-size:15px;color:#fff;left:988.80px;font-weight:700;letter-spacing:-0.55px;">In Work</div>
<svg class="a" style="left:1081px;top:358px;" width="16" height="16" viewBox="0 0 16 16"><defs><linearGradient id="gg2" x1="0" y1="0" x2="1" y2="1"><stop offset="0" stop-color="#2ab0f4"/><stop offset="1" stop-color="#0a8fdf"/></linearGradient></defs><circle cx="7.8" cy="8" r="7.8" fill="url(#gg2)"/><path d="M4.8 4 H10 L9.1 5.6 L10.9 7.4 V12.9 H7.3 V8.6 L6.6 7.9 L4.8 9.2 Z" fill="#fff"/></svg>
<div class="a" style="left:1187px;top:355px;width:30px;height:30px;background:#8e44ad;border-radius:50%;"></div>
<div class="t" style="top:359.97px;font-size:20px;color:#fff;left:1194.40px;">A</div>
<div class="t" style="top:361.10px;font-size:15px;color:#333;left:1224.60px;letter-spacing:-0.25px;">My company administration user</div>
<svg class="a" style="left:1494px;top:360px;" width="19" height="17" viewBox="0 0 19 17"><path d="M9.5 3.5 H2.5 A1.5 1.5 0 0 0 1 5 V14.5 A1.5 1.5 0 0 0 2.5 16 H12 A1.5 1.5 0 0 0 13.5 14.5 V9" fill="none" stroke="#3d85d0" stroke-width="2"/><path d="M6 12 L6.8 9.2 L14.8 1.2 L17.6 4 L9.6 12 Z" fill="#3d85d0"/></svg>
<div class="t" style="top:361.10px;font-size:15px;color:#ff2222;left:1516.50px;">0.0</div>
<div class="a" style="left:1586px;top:357px;width:92px;height:26px;box-sizing:border-box;border:1.6px dashed #1a8cf2;border-radius:3px;"></div>
<div class="t" style="top:364.18px;font-size:11.6px;color:#000;left:1607.20px;letter-spacing:-0.6px;">Drop Zone</div>
<div class="a" style="left:2px;top:401px;width:1883px;height:60px;background:#f9f9f9;"></div>
<div class="a" style="left:2px;top:401px;width:498px;height:60px;background:#f0f1f6;"></div>
<div class="a" style="left:2px;top:461px;width:1883px;height:1px;background:#e6e6e6;"></div>
<svg class="a" style="left:49px;top:416px;" width="30" height="25" viewBox="0 0 30 25"><rect x="6.8" y="1" width="21.4" height="14.6" fill="#cdfbff" stroke="#120f3c" stroke-width="2"/><rect x="1" y="8.6" width="22" height="14.6" fill="#cdfbff" stroke="#120f3c" stroke-width="2"/><rect x="7.8" y="9.6" width="14.2" height="5" fill="#80e3f8"/><path d="M6.8 8.6 V15.6 H23" fill="none" stroke="#120f3c" stroke-width="2"/></svg>
<svg class="a" style="left:101px;top:417px;" width="30" height="30" viewBox="0 0 30 30"><defs><clipPath id="cc3"><circle cx="14.6" cy="14.6" r="14.6"/></clipPath></defs><g clip-path="url(#cc3)"><rect x="-1" y="-1" width="32" height="32" fill="#4fc3f7"/><path d="M13 21 L27 3 L32 3 V18 Z" fill="#2fb7f5"/><ellipse cx="10.8" cy="7.9" rx="3.7" ry="5.3" fill="#fdd835"/><path d="M-1 18 C3 15 7.5 14 11.5 15.5 C14 16.5 16 18 18 19.5 V31 H-1 Z" fill="#43a047"/><path d="M9 16 C12 16.5 15 18 17 19.5 L12 27 Z" fill="#3a9640"/><path d="M3 27.5 C9 24 15 21 19 16 C21.5 13 24 11 26.2 11.2 C28.3 11.5 29.5 13 30.5 14.5 V31 H3 Z" fill="#689f38"/></g></svg>
<svg class="a" style="left:183px;top:424px;" width="14" height="13" viewBox="0 0 14 13"><path d="M7 0.9 L8.7 5 L13.1 5.1 L9.6 7.8 L10.9 12.2 L7 9.7 L3.1 12.2 L4.4 7.8 L0.9 5.1 L5.3 5 Z" fill="none" stroke="#2f78c4" stroke-width="1.1" stroke-linejoin="round"/></svg>
<svg class="a" style="left:217px;top:417px;" width="28" height="28" viewBox="0 0 28 28"><defs><linearGradient id="pg3" x1="0" y1="0" x2="1" y2="0"><stop offset="0" stop-color="#9be0ff"/><stop offset="1" stop-color="#3a7a9c"/></linearGradient></defs><rect x="0.8" y="0.8" width="21.6" height="21.8" fill="#fff" stroke="#666" stroke-width="1.5"/><path d="M7.6 6.5 V22.5 M15.3 6.5 V22.5" stroke="#666" stroke-width="1.4"/><rect x="0.8" y="0.8" width="21.6" height="5.8" fill="url(#pg3)" stroke="#1d5a7d" stroke-width="1.5"/><rect x="0.8" y="11.2" width="21.6" height="6.4" fill="#8dd6f5" stroke="#1d5a7d" stroke-width="1.5"/><path d="M7.6 11.2 V17.6" stroke="#1d5a7d" stroke-width="1.3"/><path d="M11.8 13.8 L18.5 10.7 L26.6 13.2 V23.6 L20 27.2 L11.8 24.5 Z" fill="#e9e9e9" stroke="#666" stroke-width="1.5" stroke-linejoin="round"/><path d="M15.5 14.2 L21 11.7 L26.4 13.6 V21 L21 23.6 L15.5 21.4 Z" fill="#4d9cc4" stroke="#1d5a7d" stroke-width="1.3"/><path d="M15.6 14.3 L21 16.4 L26.3 13.7" fill="none" stroke="#1d5a7d" stroke-width="1.1"/><path d="M16.6 14.2 L21 12.4 L25 13.8 L21 15.6 Z" fill="#8fd3f0"/><path d="M11.8 13.8 L20 16.9 V27 M20 16.9 L26.6 13.2" fill="none" stroke="#8a8a8a" stroke-width="0.9"/></svg>
<div class="t" style="top:421.50px;font-size:15px;color:#222;left:251.20px;letter-spacing:-0.35px;">Part</div>
<div class="t" style="top:422.10px;font-size:15px;color:#3b7cc0;left:300.60px;letter-spacing:0.08px;">A-0000634-01</div>
<div class="t" style="top:422.10px;font-size:15px;color:#f08a16;left:420.00px;">A</div>
<div class="a" style="left:511px;top:417px;width:62px;height:27px;background:#7dfbb0;border-radius:4px;"></div>
<div class="t" style="left:511px;top:417px;width:62px;height:27px;line-height:28.5px;text-align:center;font-size:12px;font-weight:700;color:#161616;letter-spacing:-0.45px">Rubber</div>
<div class="t" style="top:422.10px;font-size:15px;color:#333;left:744.90px;letter-spacing:0.05px;">2025-05-16</div>
<div class="t" style="top:422.10px;font-size:15px;color:#333;left:864.90px;letter-spacing:0.1px;">2025-04-29</div>
<div class="a" style="left:977px;top:401px;width:91px;height:60px;background:#007ea6;"></div>
<div class="t" style="top:422.30px;font-size:15px;color:#fff;left:988.80px;font-weight:700;letter-spacing:-0.55px;">In Work</div>
<svg class="a" style="left:1081px;top:419px;" width="16" height="16" viewBox="0 0 16 16"><defs><linearGradient id="gg3" x1="0" y1="0" x2="1" y2="1"><stop offset="0" stop-color="#2ab0f4"/><stop offset="1" stop-color="#0a8fdf"/></linearGradient></defs><circle cx="7.8" cy="8" r="7.8" fill="url(#gg3)"/><path d="M4.8 4 H10 L9.1 5.6 L10.9 7.4 V12.9 H7.3 V8.6 L6.6 7.9 L4.8 9.2 Z" fill="#fff"/></svg>
<div class="a" style="left:1187px;top:416px;width:30px;height:30px;background:#8e44ad;border-radius:50%;"></div>
<div class="t" style="top:420.97px;font-size:20px;color:#fff;left:1194.40px;">A</div>
<div class="t" style="top:422.10px;font-size:15px;color:#333;left:1224.60px;letter-spacing:-0.25px;">My company administration user</div>
<svg class="a" style="left:1494px;top:421px;" width="19" height="17" viewBox="0 0 19 17"><path d="M9.5 3.5 H2.5 A1.5 1.5 0 0 0 1 5 V14.5 A1.5 1.5 0 0 0 2.5 16 H12 A1.5 1.5 0 0 0 13.5 14.5 V9" fill="none" stroke="#3d85d0" stroke-width="2"/><path d="M6 12 L6.8 9.2 L14.8 1.2 L17.6 4 L9.6 12 Z" fill="#3d85d0"/></svg>
<div class="t" style="top:422.10px;font-size:15px;color:#ff2222;left:1516.50px;">0.0</div>
<div class="a" style="left:1586px;top:418px;width:92px;height:26px;box-sizing:border-box;border:1.6px dashed #1a8cf2;border-radius:3px;"></div>
<div class="t" style="top:425.18px;font-size:11.6px;color:#000;left:1607.20px;letter-spacing:-0.6px;">Drop Zone</div>
<div class="a" style="left:2px;top:462px;width:1883px;height:60px;background:#ffffff;"></div>
<div class="a" style="left:2px;top:462px;width:498px;height:60px;background:#f0f1f6;"></div>
<div class="a" style="left:2px;top:522px;width:1883px;height:1px;background:#e6e6e6;"></div>
<div class="a" style="left:14px;top:485px;width:11px;height:11px;box-sizing:border-box;border:1.5px solid #8c8c8c;border-radius:1px;"></div>
<svg class="a" style="left:49px;top:477px;" width="30" height="25" viewBox="0 0 30 25"><rect x="6.8" y="1" width="21.4" height="14.6" fill="#cdfbff" stroke="#120f3c" stroke-width="2"/><rect x="1" y="8.6" width="22" height="14.6" fill="#cdfbff" stroke="#120f3c" stroke-width="2"/><rect x="7.8" y="9.6" width="14.2" height="5" fill="#80e3f8"/><path d="M6.8 8.6 V15.6 H23" fill="none" stroke="#120f3c" stroke-width="2"/></svg>
<svg class="a" style="left:101px;top:478px;" width="30" height="30" viewBox="0 0 30 30"><defs><clipPath id="cc4"><circle cx="14.6" cy="14.6" r="14.6"/></clipPath></defs><g clip-path="url(#cc4)"><rect x="-1" y="-1" width="32" height="32" fill="#4fc3f7"/><path d="M13 21 L27 3 L32 3 V18 Z" fill="#2fb7f5"/><ellipse cx="10.8" cy="7.9" rx="3.7" ry="5.3" fill="#fdd835"/><path d="M-1 18 C3 15 7.5 14 11.5 15.5 C14 16.5 16 18 18 19.5 V31 H-1 Z" fill="#43a047"/><path d="M9 16 C12 16.5 15 18 17 19.5 L12 27 Z" fill="#3a9640"/><path d="M3 27.5 C9 24 15 21 19 16 C21.5 13 24 11 26.2 11.2 C28.3 11.5 29.5 13 30.5 14.5 V31 H3 Z" fill="#689f38"/></g></svg>
<svg class="a" style="left:183px;top:485px;" width="14" height="13" viewBox="0 0 14 13"><path d="M7 0.9 L8.7 5 L13.1 5.1 L9.6 7.8 L10.9 12.2 L7 9.7 L3.1 12.2 L4.4 7.8 L0.9 5.1 L5.3 5 Z" fill="none" stroke="#2f78c4" stroke-width="1.1" stroke-linejoin="round"/></svg>
<svg class="a" style="left:217px;top:478px;" width="28" height="28" viewBox="0 0 28 28"><defs><linearGradient id="pg4" x1="0" y1="0" x2="1" y2="0"><stop offset="0" stop-color="#9be0ff"/><stop offset="1" stop-color="#3a7a9c"/></linearGradient></defs><rect x="0.8" y="0.8" width="21.6" height="21.8" fill="#fff" stroke="#666" stroke-width="1.5"/><path d="M7.6 6.5 V22.5 M15.3 6.5 V22.5" stroke="#666" stroke-width="1.4"/><rect x="0.8" y="0.8" width="21.6" height="5.8" fill="url(#pg4)" stroke="#1d5a7d" stroke-width="1.5"/><rect x="0.8" y="11.2" width="21.6" height="6.4" fill="#8dd6f5" stroke="#1d5a7d" stroke-width="1.5"/><path d="M7.6 11.2 V17.6" stroke="#1d5a7d" stroke-width="1.3"/><path d="M11.8 13.8 L18.5 10.7 L26.6 13.2 V23.6 L20 27.2 L11.8 24.5 Z" fill="#e9e9e9" stroke="#666" stroke-width="1.5" stroke-linejoin="round"/><path d="M15.5 14.2 L21 11.7 L26.4 13.6 V21 L21 23.6 L15.5 21.4 Z" fill="#4d9cc4" stroke="#1d5a7d" stroke-width="1.3"/><path d="M15.6 14.3 L21 16.4 L26.3 13.7" fill="none" stroke="#1d5a7d" stroke-width="1.1"/><path d="M16.6 14.2 L21 12.4 L25 13.8 L21 15.6 Z" fill="#8fd3f0"/><path d="M11.8 13.8 L20 16.9 V27 M20 16.9 L26.6 13.2" fill="none" stroke="#8a8a8a" stroke-width="0.9"/></svg>
<div class="t" style="top:482.50px;font-size:15px;color:#222;left:251.20px;letter-spacing:-0.35px;">Part</div>
<div class="t" style="top:483.10px;font-size:15px;color:#3b7cc0;left:300.60px;letter-spacing:0.08px;">A-0000647-01</div>
<div class="t" style="top:483.10px;font-size:15px;color:#f08a16;left:420.00px;">A</div>
<div class="a" style="left:511px;top:478px;width:54px;height:27px;background:#d5fb70;border-radius:4px;"></div>
<div class="t" style="left:511px;top:478px;width:54px;height:27px;line-height:28.5px;text-align:center;font-size:12px;font-weight:700;color:#161616;letter-spacing:-0.45px">Metal</div>
<div class="t" style="top:483.10px;font-size:15px;color:#333;left:744.90px;letter-spacing:0.05px;">2025-05-16</div>
<div class="t" style="top:483.10px;font-size:15px;color:#333;left:864.90px;letter-spacing:0.1px;">2025-05-05</div>
<div class="a" style="left:977px;top:462px;width:91px;height:60px;background:#007ea6;"></div>
<div class="t" style="top:483.30px;font-size:15px;color:#fff;left:988.80px;font-weight:700;letter-spacing:-0.55px;">In Work</div>
<div class="a" style="left:1187px;top:477px;width:30px;height:30px;background:#8e44ad;border-radius:50%;"></div>
<div class="t" style="top:481.97px;font-size:20px;color:#fff;left:1194.40px;">A</div>
<div class="t" style="top:483.10px;font-size:15px;color:#333;left:1224.60px;letter-spacing:-0.25px;">My company administration user</div>
<svg class="a" style="left:1494px;top:482px;" width="19" height="17" viewBox="0 0 19 17"><path d="M9.5 3.5 H2.5 A1.5 1.5 0 0 0 1 5 V14.5 A1.5 1.5 0 0 0 2.5 16 H12 A1.5 1.5 0 0 0 13.5 14.5 V9" fill="none" stroke="#3d85d0" stroke-width="2"/><path d="M6 12 L6.8 9.2 L14.8 1.2 L17.6 4 L9.6 12 Z" fill="#3d85d0"/></svg>
<div class="t" style="top:483.10px;font-size:15px;color:#ff2222;left:1516.50px;">0.0</div>
<div class="a" style="left:1586px;top:479px;width:92px;height:26px;box-sizing:border-box;border:1.6px dashed #1a8cf2;border-radius:3px;"></div>
<div class="t" style="top:486.18px;font-size:11.6px;color:#000;left:1607.20px;letter-spacing:-0.6px;">Drop Zone</div>
<div class="a" style="left:2px;top:523px;width:1883px;height:59px;background:#f9f9f9;"></div>
<div class="a" style="left:2px;top:523px;width:498px;height:59px;background:#f0f1f6;"></div>
<div class="a" style="left:2px;top:582px;width:1883px;height:1px;background:#e6e6e6;"></div>
<div class="a" style="left:14px;top:546px;width:11px;height:11px;box-sizing:border-box;border:1.5px solid #8c8c8c;border-radius:1px;"></div>
<svg class="a" style="left:49px;top:537px;" width="30" height="25" viewBox="0 0 30 25"><rect x="6.8" y="1" width="21.4" height="14.6" fill="#cdfbff" stroke="#120f3c" stroke-width="2"/><rect x="1" y="8.6" width="22" height="14.6" fill="#cdfbff" stroke="#120f3c" stroke-width="2"/><rect x="7.8" y="9.6" width="14.2" height="5" fill="#80e3f8"/><path d="M6.8 8.6 V15.6 H23" fill="none" stroke="#120f3c" stroke-width="2"/></svg>
<svg class="a" style="left:101px;top:538px;" width="30" height="30" viewBox="0 0 30 30"><defs><clipPath id="cc5"><circle cx="14.6" cy="14.6" r="14.6"/></clipPath></defs><g clip-path="url(#cc5)"><rect x="-1" y="-1" width="32" height="32" fill="#4fc3f7"/><path d="M13 21 L27 3 L32 3 V18 Z" fill="#2fb7f5"/><ellipse cx="10.8" cy="7.9" rx="3.7" ry="5.3" fill="#fdd835"/><path d="M-1 18 C3 15 7.5 14 11.5 15.5 C14 16.5 16 18 18 19.5 V31 H-1 Z" fill="#43a047"/><path d="M9 16 C12 16.5 15 18 17 19.5 L12 27 Z" fill="#3a9640"/><path d="M3 27.5 C9 24 15 21 19 16 C21.5 13 24 11 26.2 11.2 C28.3 11.5 29.5 13 30.5 14.5 V31 H3 Z" fill="#689f38"/></g></svg>
<svg class="a" style="left:183px;top:545px;" width="14" height="13" viewBox="0 0 14 13"><path d="M7 0.9 L8.7 5 L13.1 5.1 L9.6 7.8 L10.9 12.2 L7 9.7 L3.1 12.2 L4.4 7.8 L0.9 5.1 L5.3 5 Z" fill="none" stroke="#2f78c4" stroke-width="1.1" stroke-linejoin="round"/></svg>
<svg class="a" style="left:217px;top:538px;" width="28" height="28" viewBox="0 0 28 28"><defs><linearGradient id="pg5" x1="0" y1="0" x2="1" y2="0"><stop offset="0" stop-color="#9be0ff"/><stop offset="1" stop-color="#3a7a9c"/></linearGradient></defs><rect x="0.8" y="0.8" width="21.6" height="21.8" fill="#fff" stroke="#666" stroke-width="1.5"/><path d="M7.6 6.5 V22.5 M15.3 6.5 V22.5" stroke="#666" stroke-width="1.4"/><rect x="0.8" y="0.8" width="21.6" height="5.8" fill="url(#pg5)" stroke="#1d5a7d" stroke-width="1.5"/><rect x="0.8" y="11.2" width="21.6" height="6.4" fill="#8dd6f5" stroke="#1d5a7d" stroke-width="1.5"/><path d="M7.6 11.2 V17.6" stroke="#1d5a7d" stroke-width="1.3"/><path d="M11.8 13.8 L18.5 10.7 L26.6 13.2 V23.6 L20 27.2 L11.8 24.5 Z" fill="#e9e9e9" stroke="#666" stroke-width="1.5" stroke-linejoin="round"/><path d="M15.5 14.2 L21 11.7 L26.4 13.6 V21 L21 23.6 L15.5 21.4 Z" fill="#4d9cc4" stroke="#1d5a7d" stroke-width="1.3"/><path d="M15.6 14.3 L21 16.4 L26.3 13.7" fill="none" stroke="#1d5a7d" stroke-width="1.1"/><path d="M16.6 14.2 L21 12.4 L25 13.8 L21 15.6 Z" fill="#8fd3f0"/><path d="M11.8 13.8 L20 16.9 V27 M20 16.9 L26.6 13.2" fill="none" stroke="#8a8a8a" stroke-width="0.9"/></svg>
<div class="t" style="top:542.50px;font-size:15px;color:#222;left:251.20px;letter-spacing:-0.35px;">Part</div>
<div class="t" style="top:543.10px;font-size:15px;color:#3b7cc0;left:300.60px;letter-spacing:0.08px;">A-0000650-01</div>
<div class="t" style="top:543.10px;font-size:15px;color:#f08a16;left:420.00px;">A</div>
<div class="a" style="left:511px;top:539px;width:54px;height:27px;background:#d5fb70;border-radius:4px;"></div>
<div class="t" style="left:511px;top:538px;width:54px;height:27px;line-height:28.5px;text-align:center;font-size:12px;font-weight:700;color:#161616;letter-spacing:-0.45px">Metal</div>
<div class="t" style="top:543.10px;font-size:15px;color:#333;left:744.90px;letter-spacing:0.05px;">2025-05-16</div>
<div class="t" style="top:543.10px;font-size:15px;color:#333;left:864.90px;letter-spacing:0.1px;">2025-05-05</div>
<div class="a" style="left:977px;top:523px;width:91px;height:59px;background:#007ea6;"></div>
<div class="t" style="top:543.30px;font-size:15px;color:#fff;left:988.80px;font-weight:700;letter-spacing:-0.55px;">In Work</div>
<div class="a" style="left:1187px;top:537px;width:30px;height:30px;background:#8e44ad;border-radius:50%;"></div>
<div class="t" style="top:541.97px;font-size:20px;color:#fff;left:1194.40px;">A</div>
<div class="t" style="top:543.10px;font-size:15px;color:#333;left:1224.60px;letter-spacing:-0.25px;">My company administration user</div>
<svg class="a" style="left:1494px;top:542px;" width="19" height="17" viewBox="0 0 19 17"><path d="M9.5 3.5 H2.5 A1.5 1.5 0 0 0 1 5 V14.5 A1.5 1.5 0 0 0 2.5 16 H12 A1.5 1.5 0 0 0 13.5 14.5 V9" fill="none" stroke="#3d85d0" stroke-width="2"/><path d="M6 12 L6.8 9.2 L14.8 1.2 L17.6 4 L9.6 12 Z" fill="#3d85d0"/></svg>
<div class="t" style="top:543.10px;font-size:15px;color:#ff2222;left:1516.50px;">0.0</div>
<div class="a" style="left:1586px;top:539px;width:92px;height:26px;box-sizing:border-box;border:1.6px dashed #1a8cf2;border-radius:3px;"></div>
<div class="t" style="top:546.18px;font-size:11.6px;color:#000;left:1607.20px;letter-spacing:-0.6px;">Drop Zone</div>
<div class="a" style="left:2px;top:583px;width:1883px;height:64px;background:#f8f9fb;"></div>
<div class="a" style="left:2px;top:583px;width:498px;height:64px;background:#f0f1f6;"></div>
<div class="a" style="left:220px;top:603px;width:66px;height:23px;box-sizing:border-box;background:#fff;border:2px inset #767676;border-top-color:#111;border-left-color:#111;border-right-color:#777;border-bottom-color:#777"></div>
<div class="t" style="top:606.00px;font-size:15px;color:#7a7a7a;left:224.00px;letter-spacing:-0.1px;">Filter …</div>
<div class="a" style="left:420px;top:603px;width:65px;height:23px;box-sizing:border-box;background:#fff;border:2px inset #767676;border-top-color:#111;border-left-color:#111;border-right-color:#777;border-bottom-color:#777"></div>
<div class="t" style="top:606.00px;font-size:15px;color:#7a7a7a;left:424.00px;letter-spacing:-0.1px;">Filter …</div>
<div class="a" style="left:1495px;top:603px;width:64px;height:23px;box-sizing:border-box;background:#fff;border:2px inset #767676;border-top-color:#111;border-left-color:#111;border-right-color:#777;border-bottom-color:#777"></div>
<div class="t" style="top:606.00px;font-size:15px;color:#7a7a7a;left:1499.00px;letter-spacing:-0.1px;">Filter …</div>
<div class="a" style="left:511px;top:595px;width:210px;height:40px;box-sizing:border-box;background:#fff;border:1px solid #cfcfcf;border-radius:3px;"></div>
<svg class="a" style="left:523px;top:608px;" width="12" height="11" viewBox="0 0 12 11"><path d="M0.5 0.5 H11.5 L6 10.5 Z" fill="#666"/></svg>
<div class="t" style="top:606.20px;font-size:15px;color:#666;left:540.00px;letter-spacing:-0.2px;">Filter Material Category</div>
<div class="a" style="left:2px;top:757px;width:1883px;height:12px;background:#e3e3e3;"></div>
<div class="a" style="left:2px;top:757px;width:631px;height:11px;background:#ababab;border-radius:6px;"></div>
<div class="a" style="left:8px;top:777px;width:64px;height:39px;box-sizing:border-box;border:1px solid #dcdcdc;border-radius:5px;background:#fff;"></div>
<div class="t" style="top:787.60px;font-size:15px;color:#333;left:24.90px;letter-spacing:0.3px;">10</div>
<svg class="a" style="left:49px;top:794px;" width="9" height="6" viewBox="0 0 9 6"><path d="M0.5 0.5 H8.5 L4.5 5.5 Z" fill="#444"/></svg>
<div class="t" style="top:788.10px;font-size:15px;color:#333;left:101.70px;letter-spacing:-0.15px;">Showing 1 to 6 of 6 entries (filtered from 17 total entries)</div>
<div class="a" style="left:1665px;top:777px;width:199px;height:44px;box-sizing:border-box;border:1px solid #dcdcdc;border-radius:5px;background:#fff;box-shadow:0 1px 2px rgba(0,0,0,.12);overflow:hidden"><div class="a" style="left:88px;top:0;width:44px;height:42px;background:#f2f2f2;border-left:1px solid #ddd;border-right:1px solid #ddd"></div></div>
<div class="t" style="top:789.30px;font-size:15px;color:#bdbdbd;left:1684.00px;letter-spacing:-0.55px;">Previous</div>
<div class="t" style="top:789.30px;font-size:15px;color:#222;left:1772.80px;">1</div>
<div class="t" style="top:789.30px;font-size:15px;color:#bdbdbd;left:1816.40px;letter-spacing:-0.3px;">Next</div>
<div class="a" style="left:1885px;top:29px;width:2px;height:803px;background:#f2f2f7;"></div>
<div class="a" style="left:1873px;top:74px;width:30px;height:39px;background:#7b7b7b;border-radius:8px;"></div>
<svg class="a" style="left:1882px;top:86px;" width="8" height="13" viewBox="0 0 8 13"><path d="M1.5 0.5 H8 V12.5 H1.5 V9.5 A1.6 1.6 0 1 1 1.5 6.5 V5.5 A1.6 1.6 0 1 1 1.5 2.5 Z" fill="#e6e6e6"/></svg>
<div class="a" style="left:1870px;top:291px;width:30px;height:37px;background:#0a84cf;border-radius:8px;"></div>
<svg class="a" style="left:1878px;top:300px;" width="12" height="18" viewBox="0 0 12 18"><circle cx="9" cy="9" r="8.5" fill="#fff"/><path d="M5.6 6.8 A3.3 3.3 0 1 1 10.4 9.4 C9.3 10 9 10.6 9 11.6" fill="none" stroke="#0a84cf" stroke-width="2.2"/><circle cx="9" cy="14" r="1.3" fill="#0a84cf"/></svg>
<div class="a" style="left:-2px;top:164px;width:46px;height:419px;box-sizing:border-box;border:5px solid #ed1c24;"></div>
<div class="a" style="left:1068px;top:172px;width:116px;height:414px;box-sizing:border-box;border:5px solid #ed1c24;"></div>
</body></html>
